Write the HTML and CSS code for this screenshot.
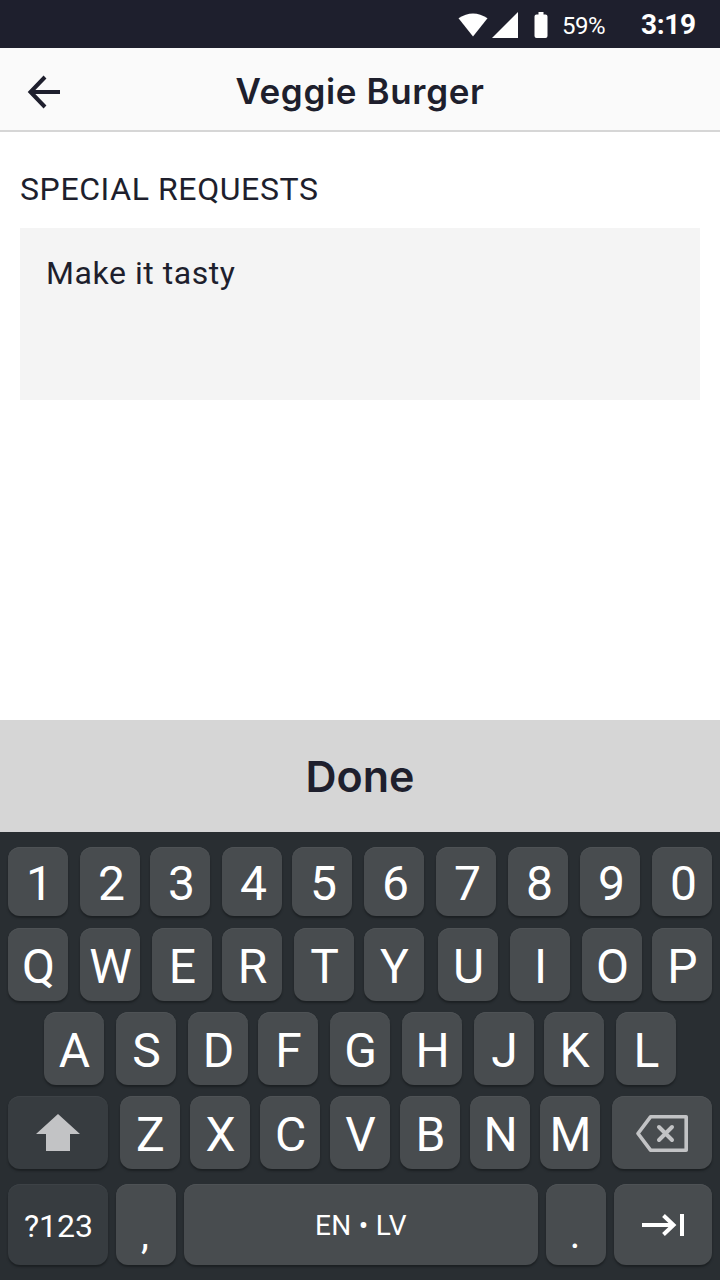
FILE: index.html
```
<!DOCTYPE html>
<html lang="en">
<head>
<meta charset="utf-8">
<title>Veggie Burger</title>
<link rel="stylesheet" href="styles.css">
</head>
<body>
<div class="screen">
  <div class="status-bar">
    <svg class="wifi" width="30" height="24" viewBox="0 0 30 24"><path d="M.5 5.2Q15-4.4 29.5 5.2L15 23.5Z"/></svg>
    <svg class="signal" width="26" height="26" viewBox="0 0 26 26"><path d="M26 0V26H0Z"/></svg>
    <svg class="battery" width="14" height="26" viewBox="0 0 14 26"><path d="M4.5 0H9.5V2.5H11.5Q13.5 2.5 13.5 4.5V24Q13.5 26 11.5 26H2.5Q.5 26 .5 24V4.5Q.5 2.5 2.5 2.5H4.5Z"/></svg>
    <span class="percent">59%</span>
    <span class="clock">3:19</span>
  </div>
  <header class="app-bar">
    <svg class="back" width="34" height="34" viewBox="0 0 34 34"><path d="M18 2 3.5 17 18 32M4 17H33"/></svg>
    <h1 class="title"><span class="title-text">Veggie Burger</span></h1>
  </header>
  <main class="content">
    <h2 class="label"><span class="label-text">SPECIAL REQUESTS</span></h2>
    <div class="note"><span class="note-text">Make it tasty</span></div>
  </main>
  <div class="done"><span class="done-text">Done</span></div>
  <div class="keyboard">
    <div class="row numbers">
      <div class="key">1</div><div class="key">2</div><div class="key near">3</div><div class="key">4</div><div class="key near">5</div><div class="key">6</div><div class="key">7</div><div class="key">8</div><div class="key">9</div><div class="key">0</div>
    </div>
    <div class="row top">
      <div class="key">Q</div><div class="key">W</div><div class="key">E</div><div class="key near">R</div><div class="key">T</div><div class="key near">Y</div><div class="key far">U</div><div class="key">I</div><div class="key">O</div><div class="key near">P</div>
    </div>
    <div class="row home">
      <div class="key">A</div><div class="key">S</div><div class="key">D</div><div class="key near">F</div><div class="key">G</div><div class="key">H</div><div class="key">J</div><div class="key near">K</div><div class="key">L</div>
    </div>
    <div class="row lower">
      <div class="key wide dark"><svg class="shift" width="44" height="37" viewBox="0 0 44 37"><path d="M22 0 44 20H34V37H10V20H0Z"/></svg></div><div class="key">Z</div><div class="key near">X</div><div class="key near">C</div><div class="key near">V</div><div class="key near">B</div><div class="key near">N</div><div class="key near">M</div><div class="key wide"><svg class="erase" width="52" height="37" viewBox="0 0 52 37"><path d="M14.5 1.8H50.2V35.2H14.5L2 18.5Z"/><path class="cross" d="M23 12 36 25M36 12 23 25"/></svg></div>
    </div>
    <div class="row bottom">
      <div class="key wide dark symbols">?123</div><div class="key punct">,</div><div class="key space">EN • LV</div><div class="key punct">.</div><div class="key enter"><svg class="next" width="42" height="24" viewBox="0 0 42 24"><path d="M0 12H32M21.5 2.5 31.5 12 21.5 21.5"/><path class="stop" d="M40 1V23"/></svg></div>
    </div>
  </div>
</div>
</body>
</html>
```
FILE: styles.css
```
* { box-sizing: border-box; }
body { margin: 0; }
.screen {
  width: 720px; height: 1280px;
  display: flex; flex-direction: column;
  overflow: hidden;
  background: #fff; color: #1e1f2d;
  font-family: Roboto, sans-serif;
}
.status-bar {
  height: 48px; flex: none;
  display: flex; align-items: flex-start; justify-content: flex-end;
  background: #1e1f2d; color: #fff; fill: #fff;
}
.wifi { margin-top: 13px; }
.signal { margin: 12px 0 0 4px; }
.battery { margin: 12px 0 0 16px; }
.percent { width: 43px; margin: 11px 0 0 14px; font-size: 24px; line-height: 30px; letter-spacing: -0.5px; white-space: nowrap; }
.clock { width: 115px; padding-left: 36px; margin-top: 10px; font-size: 28px; line-height: 30px; font-weight: 700; letter-spacing: -0.3px; white-space: nowrap; }
.app-bar {
  height: 84px; flex: none;
  display: grid; grid-template-columns: 62px 1fr 62px; align-items: center;
  background: #fafafa; border-bottom: 2px solid #d6d6d6;
}
.back { margin: 6px 0 0 27px; fill: none; stroke: #1e1f2d; stroke-width: 4; }
.title { margin: 4px 0 0; text-align: center; font-family: Inter, sans-serif; font-size: 35px; font-weight: 600; line-height: 42px; letter-spacing: 0.65px; }
.content { flex: 1; padding: 38px 20px 0; }
.label { margin: 0 0 20px; font-size: 32px; line-height: 38px; font-weight: 400; letter-spacing: 0.6px; white-space: nowrap; }
.note { height: 172px; padding: 26px; background: #f4f4f4; font-size: 32px; line-height: 38px; letter-spacing: 0.55px; }
.done {
  height: 112px; flex: none;
  display: flex; align-items: center; justify-content: center;
  background: #d6d6d6;
  font-family: Inter, sans-serif; font-size: 43px; font-weight: 600;
}
.keyboard {
  height: 448px; flex: none; padding-top: 15px;
  display: flex; flex-direction: column;
  background: #292e32; color: #fff;
}
.row { display: flex; padding: 0 8px; height: 73px; margin-bottom: 11px; }
.numbers { height: 69px; margin-bottom: 12px; }
.home { padding-left: 44px; }
.lower { margin-bottom: 15px; }
.bottom { height: 81px; margin-bottom: 0; }
.key {
  width: 60px; flex: none;
  display: flex; align-items: center; justify-content: center;
  padding: 5px 0 0 1px;
  border-radius: 12px; background: #484c4f;
  box-shadow: 0 2px 2px #1c2023, inset 0 1px 0 #4e5255;
  font-size: 48px; line-height: 56px;
}
.numbers .key { padding-left: 3px; }
.key + .key { margin-left: 12px; }
.key + .near { margin-left: 10px; }
.key + .far { margin-left: 14px; }
.key.wide { width: 100px; padding: 0; }
.key.dark { background: #373c40; box-shadow: 0 2px 2px #1c2023, inset 0 1px 0 #3d4246; }
.bottom .key + .key { margin-left: 8px; }
.key.symbols { font-size: 32px; padding: 3px 0 0 1px; }
.key.punct { font-size: 40px; padding: 20px 2px 0 0; }
.key.space { width: 354px; font-size: 28px; padding: 2px 0 0; letter-spacing: 0.3px; }
.key.enter { width: 98px; padding: 1px 0 0; }
.shift { fill: #c2c3c5; }
.erase { margin-top: 1px; fill: none; stroke: #c2c3c5; stroke-width: 3.6; stroke-linejoin: round; }
.cross { stroke-linecap: round; stroke-width: 4; }
.next { fill: none; stroke: #fff; stroke-width: 4; }
```
